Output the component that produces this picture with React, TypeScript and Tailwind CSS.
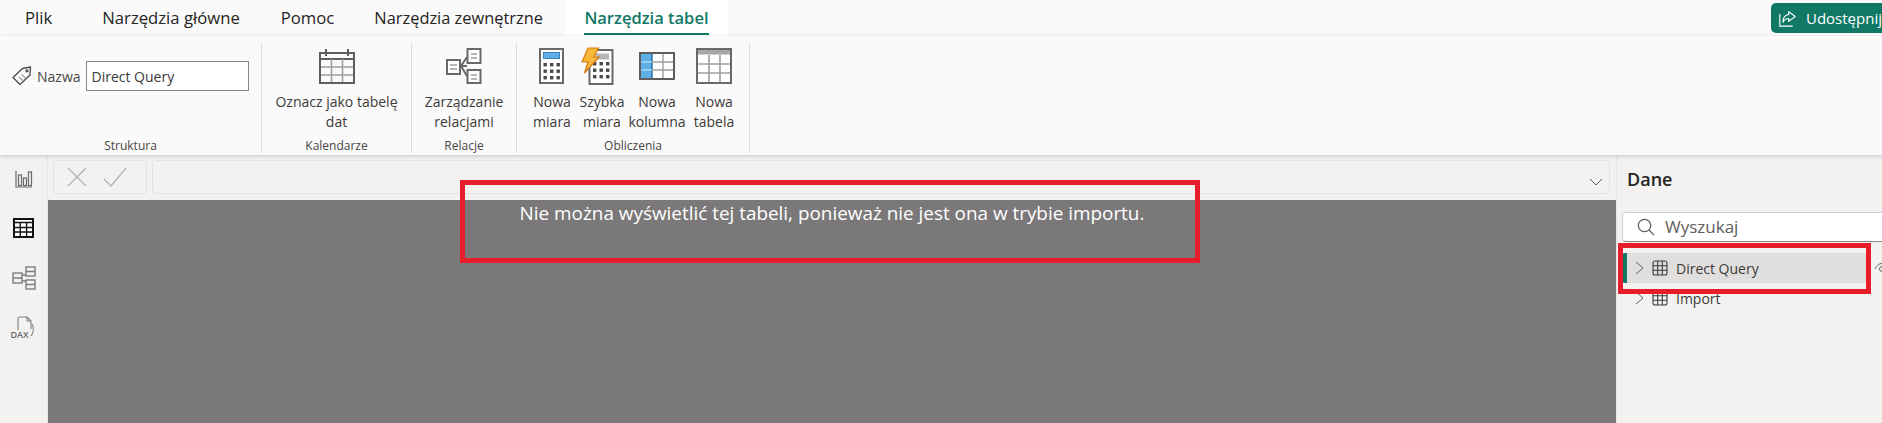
const CalendarIcon = () => (
  <svg width="36" height="36" viewBox="0 0 36 36" fill="none">
    <path d="M1 11V35H35V11M1 5H35V11H1V5Z" stroke="#605e5c" strokeWidth="2" />
    <path d="M7 1V8M29 1V8" stroke="#605e5c" strokeWidth="2" />
    <path d="M12.5 11V34M23.5 11V34M2 19H34M2 27H34" stroke="#a19f9d" strokeWidth="1.6" />
  </svg>
);

const RelationsIcon = () => (
  <svg width="36" height="36" viewBox="0 0 36 36" fill="none">
    <rect x="1" y="12" width="13" height="14" fill="#fff" stroke="#69676a" strokeWidth="2" />
    <rect x="21.5" y="1" width="13" height="14" fill="#fff" stroke="#69676a" strokeWidth="2" />
    <rect x="21.5" y="22" width="13" height="13" fill="#fff" stroke="#69676a" strokeWidth="2" />
    <path d="M4 17H11M4 21H11M25 6H31M25 10H31M25 27H31M25 31H31" stroke="#a19f9d" strokeWidth="1.6" />
    <path d="M21 9L15 18L21 28M15 18H21" stroke="#69676a" strokeWidth="2" />
  </svg>
);

const CalcKeys = ({ x }: { x: number }) => (
  <g fill="#4a4849">
    {[15, 21.5, 28].map((y) =>
      [0, 6.5, 13].map((dx) => <rect key={`${y}-${dx}`} x={x + dx} y={y} width="3.4" height="3.4" />),
    )}
  </g>
);

const MeasureIcon = () => (
  <svg width="26" height="36" viewBox="0 0 26 36" fill="none">
    <rect x="1" y="1" width="23" height="34" fill="#fff" stroke="#69676a" strokeWidth="2" />
    <rect x="4.5" y="4.5" width="16" height="6" fill="#5eaee8" stroke="#3d7fb8" strokeWidth="1" />
    <CalcKeys x={4.5} />
  </svg>
);

const QuickMeasureIcon = () => (
  <div className="mr-[9px]">
    <svg width="33" height="38" viewBox="0 0 33 38" fill="none">
      <rect x="8.5" y="3" width="23" height="34" fill="#fff" stroke="#69676a" strokeWidth="2" />
      <rect x="15" y="6.5" width="13" height="6" fill="#b8b6b6" />
      <CalcKeys x={12} />
      <path d="M7 1H17.5L13 10H18L3.5 26L7 15H1L7 1Z" fill="#f7b73a" stroke="#d57a12" strokeWidth="1.2" />
    </svg>
  </div>
);

const ColumnIcon = () => (
  <svg width="36" height="28" viewBox="0 0 36 28" fill="none">
    <rect x="1" y="1" width="34" height="26" fill="#fff" stroke="#605e5c" strokeWidth="2" />
    <rect x="2" y="2" width="11" height="24" fill="#5eaee8" />
    <path d="M13 2V26" stroke="#1f6aa8" strokeWidth="1.4" />
    <path d="M2 10H13M2 18H13" stroke="#d6ecfb" strokeWidth="1.2" />
    <path d="M24 2V26M13 10H34M13 18H34" stroke="#a19f9d" strokeWidth="1.4" />
  </svg>
);

const NewTableIcon = () => (
  <svg width="36" height="36" viewBox="0 0 36 36" fill="none">
    <rect x="1" y="1" width="34" height="34" fill="#fff" stroke="#69676a" strokeWidth="2" />
    <rect x="2" y="2" width="32" height="4.5" fill="#a8a6a6" />
    <path d="M13 7V34M24 7V34M2 16H34M2 25H34" stroke="#a19f9d" strokeWidth="1.6" />
  </svg>
);

const TagIcon = () => (
  <svg width="20" height="20" viewBox="0 0 20 20" fill="none" stroke="#4a4849" strokeWidth="1.3">
    <path d="M1 11.5L10.5 2.5L18.5 1L18 9L8 18.5L1 11.5Z" strokeLinejoin="round" />
    <path d="M7 11L11.5 15M9.5 8.5L14 12.5" stroke="#a19f9d" />
    <circle cx="15" cy="4.8" r="1" />
  </svg>
);

const ShareIcon = () => (
  <svg width="21" height="21" viewBox="0 0 21 21" fill="none" stroke="#fff" strokeWidth="1.4">
    <path d="M1 5V20H17" />
    <path d="M12 2L20 8L12 14V10.5C8.5 10.5 6.5 12 5 15C5 10 7.5 6 12 5.5V2Z" strokeLinejoin="round" />
  </svg>
);

const ReportIcon = () => (
  <svg width="18" height="18" viewBox="0 0 18 18" fill="none" stroke="#69676a" strokeWidth="1.2">
    <path d="M1 1V17H17" />
    <rect x="3.5" y="5" width="3" height="10.5" />
    <rect x="8.5" y="8" width="3" height="7.5" />
    <rect x="13.5" y="2" width="3" height="13.5" />
  </svg>
);

const DataIcon = () => (
  <svg width="21" height="20" viewBox="0 0 21 20" fill="none">
    <rect x="1" y="1" width="19" height="18" fill="#fff" stroke="#111" strokeWidth="2" />
    <path d="M1 4.5H20" stroke="#111" strokeWidth="1.5" />
    <path d="M7.3 5V18M13.6 5V18M2 9.5H19M2 14H19" stroke="#111" strokeWidth="1.4" />
  </svg>
);

const ModelIcon = () => (
  <svg width="24" height="24" viewBox="0 0 24 24" fill="none" stroke="#7f7d7e" strokeWidth="1.4">
    <rect x="1" y="7" width="9" height="10" />
    <rect x="14" y="1" width="9" height="9" />
    <rect x="14" y="14" width="9" height="9" />
    <path d="M1 12H10M14 5.5H23M14 18.5H23M10 9H14M10 15H14" />
  </svg>
);

const DaxIcon = () => (
  <div className="relative h-[24px] w-[24px]">
    <svg width="24" height="24" viewBox="0 0 24 24" fill="none" stroke="#7f7d7e" strokeWidth="1.1">
      <path d="M6 14V2.5C6 1.5 6.5 1 7.5 1H15L19 5V13M15 1V5H19" />
      <path d="M20 8C22 12 21.5 17 19 20" />
    </svg>
    <span className="absolute bottom-[1px] left-[-1px] text-[9px] leading-none font-semibold text-[#69676a]">DAX</span>
  </div>
);

const TableGlyph = () => (
  <svg width="16" height="16" viewBox="0 0 16 16" fill="none" stroke="#3b3a39" strokeWidth="1.1">
    <rect x="1" y="1" width="14" height="14" rx="2" />
    <path d="M5.7 1V15M10.3 1V15M1 5.7H15M1 10.3H15" />
  </svg>
);

const ChevronRight = () => (
  <svg width="9" height="14" viewBox="0 0 9 14" fill="none" stroke="#605e5c" strokeWidth="1">
    <path d="M1 1L8 7L1 13" />
  </svg>
);

const EyeIcon = () => (
  <svg className="shrink-0" width="16" height="12" viewBox="0 0 16 12" fill="none" stroke="#605e5c" strokeWidth="1">
    <path d="M1 7C3 3 5.5 1.5 8 1.5C10.5 1.5 13 3 15 7" />
    <circle cx="8" cy="7" r="2.5" />
  </svg>
);

const tabs = ["Plik", "Narzędzia główne", "Pomoc", "Narzędzia zewnętrzne"];

const RibbonButton = (props: { icon: React.ReactNode; lines: string[]; width: string }) => {
  return (
    <div className={`mt-[3px] flex flex-col items-center ${props.width}`}>
      <div className="flex h-[40px] items-center justify-center">{props.icon}</div>
      <div className="mt-[6px] text-center text-[14px] leading-[20px] whitespace-nowrap text-[#3b3a39]">
        {props.lines.map((l) => (
          <div key={l}>{l}</div>
        ))}
      </div>
    </div>
  );
};

const Group = (props: { label: string; width: string; children: React.ReactNode }) => {
  return (
    <div className={`flex h-full flex-col border-r border-[#dcdbda] ${props.width}`}>
      <div className="flex flex-1">{props.children}</div>
      <div className="-mb-[2px] text-center text-[12px] leading-[18px] text-[#484644]">{props.label}</div>
    </div>
  );
};

export default function App() {
  return (
    <div className="relative h-[423px] w-[1882px] overflow-hidden bg-[#f3f2f1] font-['Open_Sans',sans-serif]">
      {/* top tabs */}
      <div className="flex h-[36px] items-start justify-between bg-[#fbfafa]">
        <div className="flex h-[36px]">
          {tabs.map((t, i) => (
            <div
              key={t}
              className={`leading-[35px] text-[#252423] ${
                i === 0
                  ? "ml-[25px] mr-[50px] text-[16.7px]"
                  : i === 1
                    ? "mr-[41px] text-[16.7px]"
                    : i === 2
                      ? "mr-[40px] text-[16.7px]"
                      : "mr-[22px] text-[16.4px]"
              }`}
            >
              {t}
            </div>
          ))}
          <div className="flex h-[36px] w-[163px] justify-center bg-white">
            <div className="h-[35px] border-b-2 border-[#117865] text-[16.5px] leading-[35px] font-semibold text-[#117865]">
              Narzędzia tabel
            </div>
          </div>
        </div>
        <div className="mt-[3px] flex h-[30px] w-[111px] items-center gap-[10px] rounded-l-[5px] bg-[#117865] pl-[8px] text-[15px] text-white">
          <ShareIcon />
          Udostępnij
        </div>
      </div>

      {/* ribbon */}
      <div className="relative z-10 flex h-[119px] bg-[#fbfafa] pt-[7px] pb-[2px] shadow-[0_1px_4px_rgba(0,0,0,0.2)]">
        <Group label="Struktura" width="w-[262px]">
          <div className="mt-[18px] flex h-[30px] items-center pl-[12px]">
            <TagIcon />
            <span className="ml-[5px] text-[14px] text-[#484644]">Nazwa</span>
            <div className="ml-[5px] h-[30px] w-[163px] border border-[#8a8886] bg-white pl-[5px] text-[14px] leading-[29px] text-[#3b3a39]">
              Direct Query
            </div>
          </div>
        </Group>
        <Group label="Kalendarze" width="w-[150px]">
          <RibbonButton icon={<CalendarIcon />} lines={["Oznacz jako tabelę", "dat"]} width="w-full" />
        </Group>
        <Group label="Relacje" width="w-[105px]">
          <RibbonButton icon={<RelationsIcon />} lines={["Zarządzanie", "relacjami"]} width="w-full" />
        </Group>
        <Group label="Obliczenia" width="w-[233px]">
          <div className="flex pl-[11px]">
            <RibbonButton icon={<MeasureIcon />} lines={["Nowa", "miara"]} width="w-[48px]" />
            <RibbonButton icon={<QuickMeasureIcon />} lines={["Szybka", "miara"]} width="w-[52px]" />
            <RibbonButton icon={<ColumnIcon />} lines={["Nowa", "kolumna"]} width="w-[58px]" />
            <RibbonButton icon={<NewTableIcon />} lines={["Nowa", "tabela"]} width="w-[56px]" />
          </div>
        </Group>
      </div>

      {/* body */}
      <div className="flex h-[268px]">
        <div className="flex w-[48px] flex-col items-center border-r border-[#e6e5e4] pt-[15px]">
          <ReportIcon />
          <div className="mt-[30px]">
            <DataIcon />
          </div>
          <div className="mt-[28px]">
            <ModelIcon />
          </div>
          <div className="mt-[26px]">
            <DaxIcon />
          </div>
        </div>

        <div className="flex flex-1 flex-col">
          <div className="flex h-[45px] gap-[5px] pl-[5px] pr-[6px] pt-[5px]">
            <div className="flex h-[34px] w-[94px] items-center gap-[16px] rounded-[3px] border border-[#e4e3e2] pl-[13px]">
              <svg width="20" height="20" viewBox="0 0 20 20" fill="none" stroke="#b3b1b0" strokeWidth="1.2">
                <path d="M1 1L19 19M19 1L1 19" />
              </svg>
              <svg width="24" height="20" viewBox="0 0 24 20" fill="none" stroke="#b3b1b0" strokeWidth="1.2">
                <path d="M1 12L8 19L23 1" />
              </svg>
            </div>
            <div className="flex h-[34px] flex-1 items-center justify-end rounded-[3px] border border-[#e4e3e2] pt-[10px] pr-[6px]">
              <svg width="14" height="8" viewBox="0 0 14 8" fill="none" stroke="#605e5c" strokeWidth="1">
                <path d="M1 1L7 7L13 1" />
              </svg>
            </div>
          </div>
          <div className="flex-1 bg-[#7a7879] pt-[1px] text-center text-[18.9px] leading-[24px] text-white">
            Nie można wyświetlić tej tabeli, ponieważ nie jest ona w trybie importu.
          </div>
        </div>

        <div className="w-[266px] border-l border-[#e6e5e4] pl-[5px]">
          <div className="pt-[10px] pl-[5px] text-[18px] leading-[28px] font-semibold text-[#252423]">Dane</div>
          <div className="mt-[19px] flex h-[30px] w-[300px] items-center gap-[10px] rounded-[4px] border border-[#d1d0cf] border-b-[#8a8886] bg-white pl-[14px] text-[17px] text-[#605e5c]">
            <svg width="18" height="18" viewBox="0 0 18 18" fill="none" stroke="#605e5c" strokeWidth="1.3">
              <circle cx="7.5" cy="7.5" r="6.2" />
              <path d="M12 12L17 17" />
            </svg>
            Wyszukaj
          </div>
          <div className="mt-[11px] flex w-[300px] items-center gap-[8px]">
            <div className="flex h-[30px] w-[244px] shrink-0 items-center rounded-l-[3px] border-l-[5px] border-[#117865] bg-[#e1dfdd] pl-[8px] text-[14px] text-[#3b3a39]">
              <ChevronRight />
              <span className="ml-[8px]">
                <TableGlyph />
              </span>
              <span className="ml-[8px]">Direct Query</span>
            </div>
            <EyeIcon />
          </div>
          <div className="flex h-[30px] items-center pl-[13px] text-[14px] text-[#3b3a39]">
            <ChevronRight />
            <span className="ml-[8px]">
              <TableGlyph />
            </span>
            <span className="ml-[8px]">Import</span>
          </div>
        </div>
      </div>

      {/* red annotation boxes */}
      <div className="absolute top-[180px] left-[460px] z-20 h-[83px] w-[740px] border-[5px] border-[#e81d2b]" />
      <div className="absolute top-[243px] left-[1618px] z-20 h-[51px] w-[253px] border-[5px] border-[#e81d2b]" />
    </div>
  );
}
